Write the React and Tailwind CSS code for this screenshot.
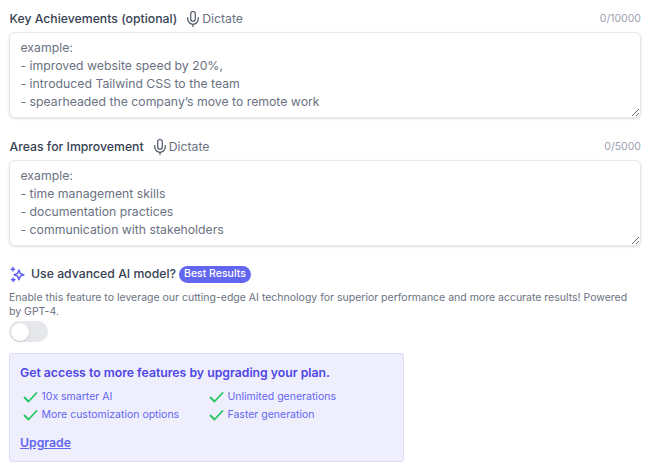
import React from "react";
import { Mic } from "lucide-react";

const font = { fontFamily: "Inter, sans-serif" };

const Sparkles = () => (
  <svg width="17" height="17" viewBox="0 0 24 24" fill="none" stroke="#5b5bf0" strokeWidth="2" strokeLinecap="round" strokeLinejoin="round">
    <path d="M14 5.5l1.9 5.1 5.1 1.9-5.1 1.9L14 19.5l-1.9-5.1L7 12.5l5.1-1.9z" />
    <path d="M5.5 2v5M3 4.5h5M6 17v5M3.5 19.5h5" />
  </svg>
);

const Check = () => (
  <svg className="shrink-0" width="15" height="12" viewBox="0 0 15 12" fill="none" stroke="#22c55e" strokeWidth="1.8" strokeLinecap="round" strokeLinejoin="round">
    <path d="M1.5 6.5l4 4 8-8.5" />
  </svg>
);

const Field = ({ label, count, placeholder, rows, mt }) => (
  <div className={mt}>
    <div className="flex items-end justify-between h-[20px]">
      <div className="flex items-center pl-[0.5px]">
        <span className="text-[12.25px] leading-[20px] font-medium text-gray-700">{label}</span>
        <button className="ml-[7px] flex items-center text-[12.25px] leading-[20px] text-gray-500">
          <Mic size={18} strokeWidth={1.6} className="text-gray-600" />
          Dictate
        </button>
      </div>
      <span className="text-[10.5px] leading-[16px] text-gray-400 mb-[2px]">{count}</span>
    </div>
    <textarea
      readOnly
      rows={rows}
      placeholder={placeholder}
      className="block w-full mt-[3px] h-[86px] rounded-md border border-gray-200 shadow-sm px-[10.5px] py-[6px] text-[12.25px] leading-[18px] bg-white outline-none placeholder:text-gray-500"
      style={font}
    />
  </div>
);

const features = ["10x smarter AI", "Unlimited generations", "More customization options", "Faster generation"];

export default function App() {
  return (
    <div className="w-[650px] h-[474px] overflow-hidden bg-white pl-[9px] pr-[9px] pt-[9px]" style={font}>
      <Field
        label="Key Achievements (optional)"
        count="0/10000"
        rows={4}
        placeholder={"example:\n- improved website speed by 20%,\n- introduced Tailwind CSS to the team\n- spearheaded the company’s move to remote work"}
      />
      <Field
        mt="mt-[18.5px]"
        label="Areas for Improvement"
        count="0/5000"
        rows={4}
        placeholder={"example:\n- time management skills\n- documentation practices\n- communication with stakeholders"}
      />

      <div className="mt-[18.5px] flex items-center h-[20px]">
        <Sparkles />
        <span className="ml-[5px] text-[12.25px] font-medium text-gray-700">Use advanced AI model?</span>
        <span className="ml-[3px] rounded-full bg-[#6366f1] px-[5px] h-[17px] flex items-center text-[10.5px] font-medium text-white">Best Results</span>
      </div>
      <p className="mt-[7px] text-[10.5px] leading-[14px] text-gray-500">
        Enable this feature to leverage our cutting-edge AI technology for superior performance and more accurate results! Powered by GPT-4.
      </p>
      <div className="mt-[2px] w-[39px] h-[21px] rounded-full bg-gray-200 p-[1.5px]">
        <div className="w-[18px] h-[18px] rounded-full bg-white shadow" />
      </div>

      <div className="mt-[11px] w-[395px] h-[109px] rounded-[3px] border border-[#dcdcf8] bg-[#eeeefd] px-[10px] pt-[10px]">
        <h3 className="text-[12.25px] leading-[18px] font-semibold text-[#4f46e5]">Get access to more features by upgrading your plan.</h3>
        <ul className="mt-[8px] grid grid-cols-[186px_1fr] gap-y-[3px]">
          {features.map((f) => (
            <li key={f} className="flex items-center pl-[3px] text-[10.5px] leading-[14.5px] text-[#6366f1]">
              <Check />
              <span className="ml-[3.5px]">{f}</span>
            </li>
          ))}
        </ul>
        <a className="block mt-[12px] text-[12.25px] leading-[18px] font-semibold text-[#6366f1] underline">Upgrade</a>
      </div>
    </div>
  );
}
